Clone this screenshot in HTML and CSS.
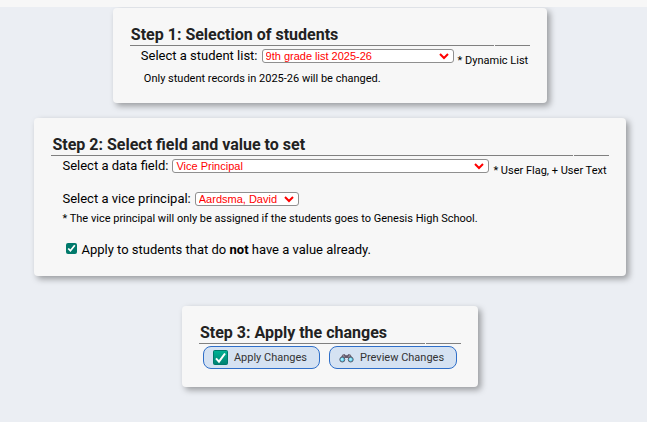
FILE: index.html
```html
<!DOCTYPE html>
<html lang="en">
<head>
<meta charset="utf-8">
<title>Mass Change Students</title>
<link rel="stylesheet" href="styles.css">
</head>
<body>
<main class="steps">
  <section class="card">
    <header class="card-head"><h2>Step 1: Selection of students</h2><span class="head-cell"></span></header>
    <div class="field">
      <label for="student-list">Select a student list:</label>
      <span class="picker picker-list">
        <select id="student-list"><option>9th grade list 2025-26</option></select>
        <svg class="chevron" viewBox="0 0 12 8" aria-hidden="true"><path d="M2 2l4 4 4-4"/></svg>
      </span>
      <small class="hint">* Dynamic List</small>
    </div>
    <p class="note note-list">Only student records in 2025-26 will be changed.</p>
  </section>

  <section class="card">
    <header class="card-head"><h2>Step 2: Select field and value to set</h2><span class="head-cell"></span></header>
    <div class="field">
      <label for="data-field">Select a data field:</label>
      <span class="picker picker-field">
        <select id="data-field"><option>Vice Principal</option></select>
        <svg class="chevron" viewBox="0 0 12 8" aria-hidden="true"><path d="M2 2l4 4 4-4"/></svg>
      </span>
      <small class="hint">* User Flag, + User Text</small>
    </div>
    <div class="field field-value">
      <label for="vice-principal">Select a vice principal:</label>
      <span class="picker picker-value">
        <select id="vice-principal"><option>Aardsma, David</option></select>
        <svg class="chevron" viewBox="0 0 12 8" aria-hidden="true"><path d="M2 2l4 4 4-4"/></svg>
      </span>
    </div>
    <p class="note">* The vice principal will only be assigned if the students goes to Genesis High School.</p>
    <div class="check">
      <input type="checkbox" id="only-empty" checked>
      <label for="only-empty">Apply to students that do <b>not</b> have a value already.</label>
    </div>
  </section>

  <section class="card card-apply">
    <header class="card-head"><h2>Step 3: Apply the changes</h2><span class="head-cell"></span></header>
    <div class="actions">
      <button type="button">
        <svg class="icon" viewBox="0 0 16 16" aria-hidden="true">
          <defs><linearGradient id="tick-fill" x1="0" y1="0" x2="0" y2="1"><stop offset="0" stop-color="#00b294"/><stop offset="1" stop-color="#008272"/></linearGradient></defs>
          <rect x=".5" y=".5" width="14" height="14" rx="1" fill="url(#tick-fill)" stroke="#00796b"/>
          <path d="M3 8.300l3 3.400L12 3.500" fill="none" stroke="#fff" stroke-width="2"/>
        </svg>
        Apply Changes
      </button>
      <button type="button">
        <svg class="icon" viewBox="0 0 16 16" aria-hidden="true">
          <path d="M1 9l2.400-4.200 2-.8 1.200 1.200h1.800L9.600 4l2 .8L14 9l-4 1-1-2H6l-1 2z" fill="#635a6b"/>
          <path d="M4 5.200l1.500 2M11 5.200L9.500 7.200" stroke="#aaa3b0" stroke-width="1"/>
          <circle cx="3.300" cy="9.500" r="2.500" fill="#45c1e8" stroke="#60616e" stroke-width="1"/>
          <circle cx="11.700" cy="9.500" r="2.500" fill="#45c1e8" stroke="#60616e" stroke-width="1"/>
          <circle cx="3.100" cy="9.400" r="1.300" fill="#a6edfb"/>
          <circle cx="11.500" cy="9.400" r="1.300" fill="#a6edfb"/>
        </svg>
        Preview Changes
      </button>
    </div>
  </section>
</main>
</body>
</html>
```
FILE: styles.css
```css
* { box-sizing: border-box; }

body {
  margin: 0;
  min-height: 100vh;
  background: #ebeef3;
  border-top: 7px solid #f7f7f7;
  color: #000;
  font-family: Roboto, sans-serif;
  font-size: 13px;
  line-height: 16px;
}

.steps {
  display: flex;
  flex-direction: column;
  align-items: center;
  padding: 1px 0 16px 13px;
}

.card {
  margin-bottom: 15px;
  padding: 18px 17px;
  background: #f7f7f7;
  border-radius: 4px;
  box-shadow: 3px 3px 6px rgba(0, 0, 0, .35);
}

.card-apply { margin-top: 15px; }

.card-head { display: flex; gap: 1px; }

.card-head h2,
.head-cell { border-bottom: 1px solid #808080; }

.card-head h2 {
  flex: 1;
  margin: 0;
  padding: 0 0 2px 1px;
  color: #222;
  font-size: 16px;
  line-height: 17px;
}

.head-cell { width: 35px; }

.field {
  display: flex;
  align-items: flex-start;
  gap: 4px;
  padding: 2px 2px 0 11px;
}

.field-value { padding-top: 14px; }

.picker { position: relative; }

.picker select {
  display: block;
  width: 100%;
  height: 14px;
  margin-top: 1px;
  padding: 0 0 0 3px;
  appearance: none;
  border: 1px solid #8f8f8f;
  border-radius: 3px;
  background: #fff;
  color: #f00;
  font: 11px/12px "Liberation Sans", sans-serif;
}

.picker-list { width: 192px; }
.picker-field { width: 317px; }
.picker-value { width: 104px; }

.chevron {
  position: absolute;
  top: 4px;
  right: 4px;
  width: 12px;
  height: 8px;
  fill: none;
  stroke: #f00;
  stroke-width: 2;
  pointer-events: none;
}

.hint {
  padding-top: 7px;
  font-size: 11px;
  line-height: 12px;
}

.note {
  margin: 6px 0 0 11px;
  font-size: 11px;
  line-height: 12px;
}

.note-list { padding-left: 3px; }

.check {
  display: flex;
  align-items: flex-start;
  gap: 4px;
  margin: 17px 0 0 15px;
}

.check input {
  width: 11px;
  height: 11px;
  margin: 1px 0 0;
  accent-color: #00796b;
}

.actions {
  display: flex;
  gap: 9px;
  padding: 2px 4px 0;
}

.actions button {
  display: flex;
  align-items: center;
  gap: 5px;
  height: 23px;
  padding: 0 12px 0 9px;
  border: 1px solid #2f6fc9;
  border-radius: 8px;
  background: #d5e2f2;
  color: #333;
  font: 11px/16px Roboto, sans-serif;
}

.icon { width: 16px; height: 16px; }
```
